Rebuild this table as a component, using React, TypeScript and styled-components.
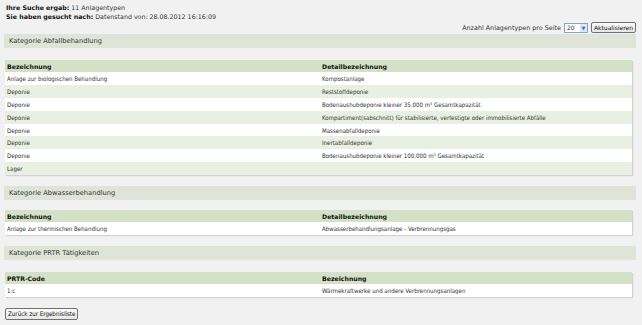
import styled, { createGlobalStyle } from 'styled-components';

const GlobalStyle = createGlobalStyle`
  html, body {
    margin: 0;
    padding: 0;
    background: #f1f1f1;
  }
  body {
    font-family: 'DejaVu Sans', Verdana, sans-serif;
    font-size: 6.5px;
    color: #333;
  }
`;

const Page = styled.div`
  padding: 3px 6px 4px 4px;
  display: flex;
  flex-direction: column;
`;

const SearchInfo = styled.div`
  padding-left: 2px;
  line-height: 9px;
  font-size: 6.3px;
  color: #333;
  & b {
    color: #111;
  }
`;

const Toolbar = styled.div`
  display: flex;
  justify-content: flex-end;
  align-items: center;
  gap: 3px;
  height: 13px;
  font-size: 6.4px;
`;

const Select = styled.div`
  width: 20px;
  height: 8px;
  border: 1px solid #8aa4c8;
  background: #fff;
  display: flex;
  align-items: center;
  justify-content: space-between;
  padding-left: 2px;
  font-size: 6px;
  & span {
    width: 7px;
    height: 8px;
    background: #dde8f7;
    color: #4a6fa8;
    font-size: 5px;
    display: flex;
    align-items: center;
    justify-content: center;
  }
`;

const Button = styled.button`
  font-family: 'DejaVu Sans', Tahoma, sans-serif;
  font-size: 6px;
  height: 11px;
  padding: 0 2px;
  border: 1px solid #707070;
  border-radius: 2px;
  background: linear-gradient(#fbfbfb, #e6e6e6);
  color: #111;
  line-height: 8px;
`;

const CategoryBar = styled.div<{ $top: number }>`
  margin-top: ${({ $top }) => $top}px;
  height: 14px;
  line-height: 14px;
  background: #dfe3d8;
  padding-left: 5px;
  font-size: 6.7px;
  color: #333;
`;

const Table = styled.table<{ $top: number }>`
  margin: ${({ $top }) => $top}px 4px 0 1px;
  border-collapse: collapse;
  table-layout: fixed;
  background: #fff;
  box-shadow: 1px 1px 1px rgba(0, 0, 0, 0.12);
  & th,
  & td {
    text-align: left;
    padding: 0 2px;
    white-space: nowrap;
    overflow: hidden;
  }
  & th {
    height: 12px;
    background: #d4e1c7;
    color: #111;
    font-weight: bold;
    font-size: 6.2px;
  }
  & td {
    height: 12.9px;
    font-family: 'DejaVu Sans Condensed', 'DejaVu Sans', sans-serif;
    font-size: 6.1px;
    color: #333;
  }
  & tbody tr:nth-child(even) td {
    background: #e9efe2;
  }
`;

const BackButton = styled(Button)`
  align-self: flex-start;
  margin-top: 11px;
  margin-left: 1px;
  height: 12px;
  font-family: 'DejaVu Sans Condensed', 'DejaVu Sans', sans-serif;
  font-size: 6.2px;
`;

const abfall: [string, string][] = [
  ['Anlage zur biologischen Behandlung', 'Kompostanlage'],
  ['Deponie', 'Reststoffdeponie'],
  ['Deponie', 'Bodenaushubdeponie kleiner 35.000 m³ Gesamtkapazität'],
  ['Deponie', 'Kompartiment(sabschnitt) für stabilisierte, verfestigte oder immobilisierte Abfälle'],
  ['Deponie', 'Massenabfalldeponie'],
  ['Deponie', 'Inertabfalldeponie'],
  ['Deponie', 'Bodenaushubdeponie kleiner 100.000 m³ Gesamtkapazität'],
  ['Lager', ''],
];

function DataTable({ top, head, rows }: { top: number; head: [string, string]; rows: [string, string][] }) {
  return (
    <Table $top={top}>
      <colgroup>
        <col style={{ width: 315 }} />
        <col style={{ width: 312 }} />
      </colgroup>
      <thead>
        <tr>
          <th>{head[0]}</th>
          <th>{head[1]}</th>
        </tr>
      </thead>
      <tbody>
        {rows.map((r, i) => (
          <tr key={i}>
            <td>{r[0]}</td>
            <td>{r[1]}</td>
          </tr>
        ))}
      </tbody>
    </Table>
  );
}

export default function App() {
  return (
    <>
      <GlobalStyle />
      <Page>
        <SearchInfo>
          <div>
            <b>Ihre Suche ergab:</b> 11 Anlagentypen
          </div>
          <div>
            <b>Sie haben gesucht nach:</b> Datenstand von: 28.08.2012 16:16:09
          </div>
        </SearchInfo>
        <Toolbar>
          <span>Anzahl Anlagentypen pro Seite</span>
          <Select>
            20<span>▼</span>
          </Select>
          <Button>Aktualisieren</Button>
        </Toolbar>
        <CategoryBar $top={0}>Kategorie Abfallbehandlung</CategoryBar>
        <DataTable top={12} head={['Bezeichnung', 'Detailbezeichnung']} rows={abfall} />
        <CategoryBar $top={11}>Kategorie Abwasserbehandlung</CategoryBar>
        <DataTable
          top={10}
          head={['Bezeichnung', 'Detailbezeichnung']}
          rows={[['Anlage zur thermischen Behandlung', 'Abwasserbehandlungsanlage - Verbrennungsgas']]}
        />
        <CategoryBar $top={11}>Kategorie PRTR Tätigkeiten</CategoryBar>
        <DataTable
          top={12}
          head={['PRTR-Code', 'Bezeichnung']}
          rows={[['1.c', 'Wärmekraftwerke und andere Verbrennungsanlagen']]}
        />
        <BackButton>Zurück zur Ergebnisliste</BackButton>
      </Page>
    </>
  );
}
